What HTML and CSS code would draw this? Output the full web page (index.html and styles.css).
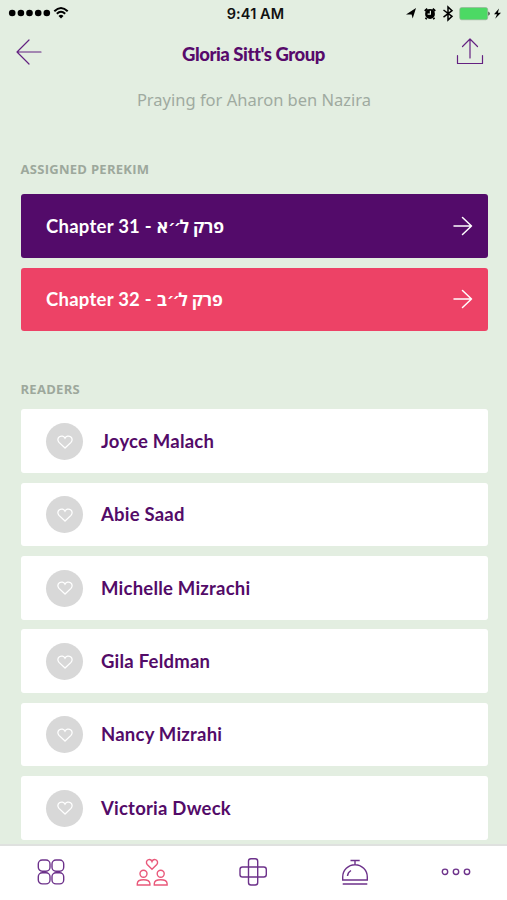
FILE: index.html
```html
<!DOCTYPE html>
<html lang="en">
<head>
<meta charset="utf-8">
<title>Gloria Sitt's Group</title>
<link rel="stylesheet" href="styles.css">
</head>
<body>
<svg class="symbols" aria-hidden="true">
  <symbol id="heart" viewBox="0 0 16 14"><path d="M8 13 L2 7.4 C.3 5.6 .6 3 2.4 1.8 C4.3 .5 6.8 1 8 3.2 C9.2 1 11.7 .5 13.6 1.8 C15.4 3 15.7 5.6 14 7.4 Z"/></symbol>
  <symbol id="next" viewBox="0 0 20 20"><path d="M1 10H18.500M9.500 1.500L18.500 10L9.500 18.500"/></symbol>
</svg>
<div class="screen">
  <div class="status">
    <div class="signal">
      <svg width="62" height="16" viewBox="0 0 62 16">
        <g><circle cx="5.200" cy="8" r="3.300"/><circle cx="13.900" cy="8" r="3.300"/><circle cx="22.500" cy="8" r="3.300"/><circle cx="31.200" cy="8" r="3.300"/><circle cx="39.800" cy="8" r="3.300"/></g>
        <path class="wave" d="M47.300 6.200Q54 -.2 60.700 6.200M49.800 8.700Q54 4.900 58.200 8.700"/>
        <path d="M51.500 11Q54 8.700 56.500 11L54 13.500Z"/>
      </svg>
    </div>
    <div class="time">9:41 AM</div>
    <div class="indicators">
      <svg width="98" height="18" viewBox="0 0 98 18">
        <path d="M0 10.500L10 4L6.700 14.500L5.600 10.400Z"/>
        <circle cx="24" cy="10" r="4.900"/>
        <path class="bell" d="M18.800 7L21.300 4.800M26.700 4.800L29.200 7M20.600 14L19.600 15.200M27.400 14L28.400 15.200"/>
        <path class="hand" d="M24.400 6.800V10.200H21.600"/>
        <path class="blue" d="M37.500 6L46 12.300L42 16V3L46 6.700L37.500 13.200"/>
        <rect class="battery" x="53.700" y="3.500" width="28" height="12.300" rx="2"/>
        <path d="M82.500 7.500Q84.700 9.600 82.500 11.700Z"/>
        <path d="M93 4.500L88 10.200H91L89.200 14.700L95 8.800H91.900Z"/>
      </svg>
    </div>
  </div>
  <header class="header">
    <svg width="28" height="28" viewBox="0 0 28 28"><path d="M26 14H2M14 2L2 14L14 26"/></svg>
    <h1>Gloria Sitt's Group</h1>
    <svg width="28" height="28" viewBox="0 0 28 28"><path d="M1.500 17.500V25.500H26.500V17.500M14 20V1M6.500 8.500L14 1L21.500 8.500"/></svg>
  </header>
  <main class="content">
    <p class="subtitle">Praying for Aharon ben Nazira</p>
    <h2>ASSIGNED PEREKIM</h2>
    <div class="list chapters">
      <div class="card purple"><span>Chapter 31 - <span class="hebrew" lang="he">פרק ל<span class="marks">׳׳</span>א</span></span><svg class="next"><use href="#next"/></svg></div>
      <div class="card pink"><span>Chapter 32 - <span class="hebrew" lang="he">פרק ל<span class="marks">׳׳</span>ב</span></span><svg class="next"><use href="#next"/></svg></div>
    </div>
    <h2>READERS</h2>
    <div class="list readers">
      <div class="card"><i class="avatar"><svg><use href="#heart"/></svg></i><span>Joyce Malach</span></div>
      <div class="card"><i class="avatar"><svg><use href="#heart"/></svg></i><span>Abie Saad</span></div>
      <div class="card"><i class="avatar"><svg><use href="#heart"/></svg></i><span>Michelle Mizrachi</span></div>
      <div class="card"><i class="avatar"><svg><use href="#heart"/></svg></i><span>Gila Feldman</span></div>
      <div class="card"><i class="avatar"><svg><use href="#heart"/></svg></i><span>Nancy Mizrahi</span></div>
      <div class="card"><i class="avatar"><svg><use href="#heart"/></svg></i><span>Victoria Dweck</span></div>
    </div>
  </main>
  <nav class="tabs">
    <svg viewBox="0 0 32 32"><rect x="3.300" y="4" width="11.700" height="11.200" rx="4"/><rect x="17" y="4" width="11.700" height="11.200" rx="4"/><rect x="3.300" y="16.700" width="11.700" height="11.200" rx="4"/><rect x="17" y="16.700" width="11.700" height="11.200" rx="4"/></svg>
    <svg class="active" viewBox="0 0 32 32"><path d="M16 13.200L11.200 8.500C9.700 6.600 10.500 4 12.700 3.600C14.200 3.300 15.500 4.100 16 5.500C16.500 4.100 17.800 3.300 19.300 3.600C21.500 4 22.300 6.600 20.800 8.500Z"/><circle cx="7.500" cy="17.700" r="3.500"/><circle cx="24.700" cy="17.700" r="3.500"/><path d="M1.300 29V27.500Q1.500 23.800 7.500 23.800T13.900 27.500V29ZM18.300 29V27.500Q18.500 23.800 24.700 23.800T31.100 27.500V29Z"/></svg>
    <svg viewBox="0 0 32 32"><rect x="11.500" y="2.700" width="9.200" height="26.300" rx="2.500"/><rect x="3" y="11" width="26.300" height="10" rx="2.500"/></svg>
    <svg viewBox="0 0 32 32"><path d="M3.700 24V21A12.300 12.300 0 0 1 28.300 21V24ZM3.700 28H28.300M16 8.500V4.500M11.500 4.500H20.700M8.500 20Q8.700 16.500 12 14.500"/></svg>
    <svg viewBox="0 0 32 32"><circle cx="5" cy="15.800" r="2.700"/><circle cx="16" cy="15.800" r="2.700"/><circle cx="27" cy="15.800" r="2.700"/></svg>
  </nav>
</div>
</body>
</html>
```
FILE: styles.css
```css
* { box-sizing: border-box; }
body { margin: 0; background: #e3eee1; }
.symbols { display: none; }
.screen { width: 507px; height: 900px; display: flex; flex-direction: column; overflow: hidden; font-family: Lato, "Open Sans", sans-serif; }
svg { display: block; flex: none; }

.status { height: 27px; display: grid; grid-template-columns: 1fr auto 1fr; align-items: center; padding: 0 3px 0 7px; }
.signal svg { margin-top: -2px; }
.wave { fill: none; stroke: #000; stroke-width: 2; }
.time { font: 600 14.500px/27px Inter, sans-serif; color: #111; letter-spacing: .1px; }
.indicators { display: flex; justify-content: flex-end; }
.indicators svg { margin-top: -1px; }
.bell { fill: none; stroke: #000; stroke-width: 2; }
.hand { fill: none; stroke: #e3eee1; stroke-width: 1.200; }
.blue { fill: none; stroke: #000; stroke-width: 1.500; }
.battery { fill: #4cd964; stroke: #9aa99a; stroke-width: .6; }

.header { height: 52px; display: grid; grid-template-columns: 28px 1fr 28px; align-items: center; padding: 0 23px 0 15px; }
.header svg { fill: none; stroke: #642181; stroke-width: 1.200; stroke-linecap: round; stroke-linejoin: round; margin-bottom: 2px; }
h1 { margin: 0; padding: 2px 0 0 8px; text-align: center; font: 900 18.500px/24px Lato, sans-serif; letter-spacing: -.45px; color: #570a6b; }

.content { flex: 1; min-height: 0; padding: 0 19.500px 0 20.500px; overflow: hidden; }
.subtitle { margin: 10px 0 0; font: 400 16.500px/22px "Noto Sans", sans-serif; text-align: center; color: #9faaa0; }
h2 { margin: 47px 0 0; font: 700 13px/22px "Open Sans", sans-serif; letter-spacing: .28px; color: #9da89c; }
.list { display: flex; flex-direction: column; gap: 9.650px; margin-top: 14.300px; }
.chapters + h2 { margin-top: 47px; }
.readers { margin-top: 9px; letter-spacing: .22px; }
.card { height: 63.700px; flex: none; display: flex; align-items: center; border-radius: 3px; background: #fff; padding: 0 15px 0 25.500px; color: #530b68; font-size: 18.500px; font-weight: 700; white-space: pre; }
.purple, .pink { justify-content: space-between; color: #fff; letter-spacing: .25px; }
.purple { background: #530b6a; }
.pink { background: #ed4266; }
.hebrew { font-family: "Open Sans", "DejaVu Sans", sans-serif; font-size: 17.500px; letter-spacing: -.2px; }
.marks { letter-spacing: -2px; }
.next { width: 20px; height: 20px; fill: none; stroke: #fff; stroke-width: 1.500; stroke-linecap: round; stroke-linejoin: round; }
.avatar { width: 37px; height: 37px; border-radius: 50%; background: #d8d8d8; display: flex; align-items: center; justify-content: center; margin-right: 18px; margin-top: 1px; }
.avatar svg { width: 16px; height: 14px; fill: none; stroke: #fff; stroke-width: 1.300; }

.tabs { height: 56px; flex: none; display: flex; justify-content: space-around; align-items: center; border-top: 2px solid #dfe1df; background: #fff; padding-bottom: 2px; }
.tabs svg { width: 32px; height: 32px; fill: none; stroke: #6d328b; stroke-width: 1.400; }
.tabs .active { stroke: #e9587a; }
```
